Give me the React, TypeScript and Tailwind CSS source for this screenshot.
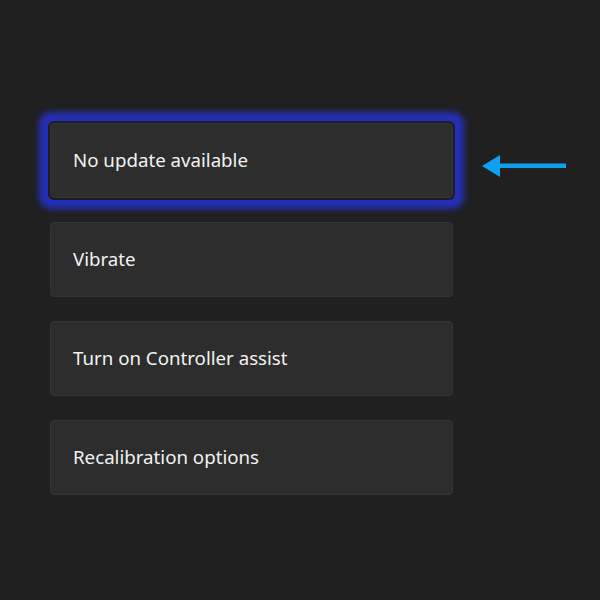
import React from "react";

const items = ["No update available", "Vibrate", "Turn on Controller assist", "Recalibration options"];

export default function App() {
  return (
    <div className="relative w-[600px] h-[600px] bg-[#202020] overflow-hidden" style={{ fontFamily: '"Noto Sans", "Open Sans", sans-serif' }}>
      <div className="flex flex-col gap-[24.5px] pt-[123px] pl-[50px]">
        {items.map((t, i) => (
          <div
            key={t}
            className={
              "w-[403px] h-[74.5px] rounded-[4px] bg-[#2d2d2d] border border-[#353535] flex items-center pl-[22px] text-[18.7px] text-[#f2f2f2] " +
              (i === 0 ? "shadow-[0_0_0_2px_#1c1c1c,0_0_6px_11px_#2530b8]" : "")
            }
          >
            {t}
          </div>
        ))}
      </div>
      <svg className="absolute left-[480px] top-[152px]" width="90" height="28" viewBox="0 0 90 28">
        <polygon points="2,14 20,3 20,25" fill="#0ea1f2" />
        <rect x="16" y="11.5" width="70" height="4.5" fill="#0ea1f2" />
      </svg>
    </div>
  );
}
